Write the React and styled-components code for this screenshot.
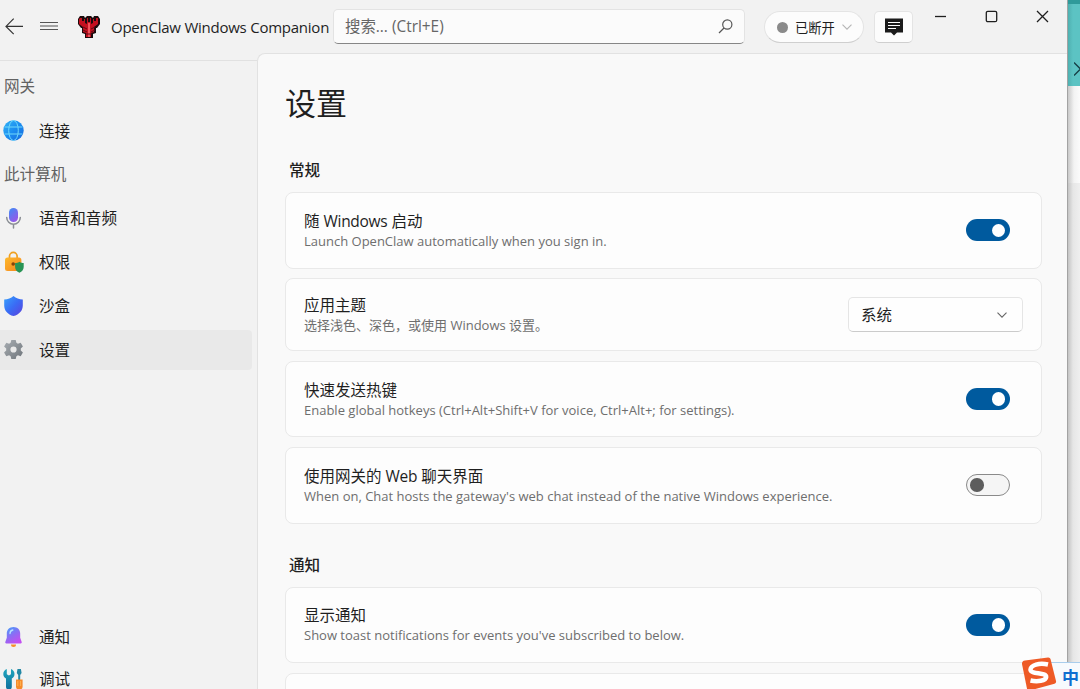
import React from "react";
import styled, { createGlobalStyle } from "styled-components";

const GlobalStyle = createGlobalStyle`
  * {
    box-sizing: border-box;
  }

  body {
    margin: 0;
    overflow: hidden;
    font-family: "Open Sans", "Noto Sans CJK SC", sans-serif;
    color: #1f1f1f;
  }

  svg {
    display: block;
    flex-shrink: 0;
  }
`;

const Screen = styled.div`
  position: relative;
  display: flex;
  width: 1080px;
  height: 689px;
  overflow: hidden;
`;

const Window = styled.div`
  display: flex;
  flex-direction: column;
  width: 1068px;
  height: 689px;
  background: #f2f2f2;
  border-right: 1px solid #a3a3a3;
`;

const Desktop = styled.div`
  flex: 1;
  display: flex;
  flex-direction: column;
  background: linear-gradient(90deg, #c4c4c4, #e6e6e6 5px, #efefef);
`;

const TealBlock = styled.div`
  display: flex;
  justify-content: flex-end;
  height: 86px;
  padding-top: 58px;
  overflow: hidden;
  border-top: 4px solid #2f9a9a;
  background: linear-gradient(90deg, #4fb0b0, #5cc3c3 5px);
`;

const DesktopEdge = styled.div`
  height: 97px;
  background: linear-gradient(90deg, #c9c9c9, #f3f3f3 6px, #fbfbfb);
`;

const TitleBar = styled.header`
  display: flex;
  align-items: flex-start;
  height: 53px;
`;

const NavIcon = styled.div`
  margin: ${(props) => props.$margin};
`;

const AppName = styled.div`
  width: 222px;
  margin: 16px 0 0 10px;
  font-size: 15px;
  line-height: 22px;
  letter-spacing: -0.24px;
  white-space: nowrap;
`;

const SearchBox = styled.div`
  display: flex;
  align-items: center;
  justify-content: space-between;
  width: 412px;
  height: 35px;
  margin-top: 9px;
  padding: 0 11px;
  border: 1px solid #e3e3e3;
  border-bottom: 1.5px solid #868686;
  border-radius: 5px;
  background: #fbfbfb;
  color: #666;
  font-size: 15.4px;
  line-height: 22px;
`;

const StatusPill = styled.div`
  display: flex;
  align-items: center;
  width: 100px;
  height: 32px;
  margin: 11px 0 0 19px;
  padding-left: 12px;
  border: 1px solid #e4e4e4;
  border-bottom-color: #cfcfcf;
  border-radius: 16px;
  background: #fcfcfc;
  font-size: 13.3px;
`;

const StatusDot = styled.span`
  width: 11px;
  height: 11px;
  margin-right: 7px;
  border-radius: 50%;
  background: #8a8a8a;
`;

const ChatButton = styled.div`
  display: flex;
  align-items: center;
  justify-content: center;
  width: 39px;
  height: 32px;
  margin: 11px 0 0 10px;
  border: 1px solid #e4e4e4;
  border-bottom-color: #cfcfcf;
  border-radius: 5px;
  background: #fcfcfc;
`;

const Controls = styled.div`
  display: flex;
  gap: 38px;
  margin: 10px 0 0 21px;
`;

const Body = styled.div`
  flex: 1;
  display: flex;
  min-height: 0;
`;

const Sidebar = styled.nav`
  display: flex;
  flex-direction: column;
  width: 257px;
  margin-top: 7px;
  padding-top: 4px;
  border-top: 1px solid #e1e1e1;
`;

const NavHeading = styled.div`
  height: 43.8px;
  padding-left: 4px;
  color: #626262;
  font-size: 15.6px;
  line-height: 43px;
`;

const NavItem = styled.div`
  display: flex;
  align-items: center;
  gap: 15px;
  width: 252px;
  height: 39.8px;
  margin: 2px 0;
  padding-left: 3px;
  border-radius: 0 4px 4px 0;
  background: ${(props) => (props.$active ? "#e9e9e9" : "transparent")};
  font-size: 15.6px;
  line-height: 22px;
`;

const NavFooter = styled.div`
  margin-top: auto;
  margin-bottom: -12px;
`;

const Page = styled.main`
  flex: 1;
  height: 690px;
  padding: 27px 25px 0 27px;
  border: 1px solid #e2e2e2;
  border-right: none;
  border-top-left-radius: 8px;
  background: #f9f9f9;
`;

const PageTitle = styled.h1`
  margin: 0;
  font-size: 31px;
  font-weight: 400;
  line-height: 44px;
`;

const SectionTitle = styled.h2`
  margin: ${(props) => props.$top} 0 11px 4px;
  font-size: 15.6px;
  font-weight: 500;
  line-height: 22px;
`;

const CardList = styled.div`
  display: flex;
  flex-direction: column;
  gap: 9.5px;
`;

const Card = styled.section`
  display: flex;
  align-items: center;
  justify-content: space-between;
  width: 757px;
  height: ${(props) => props.$height || "76.7px"};
  flex-shrink: 0;
  padding: 0 ${(props) => props.$right || "31px"} 0 18px;
  border: 1px solid #e9e9e9;
  border-radius: 8px;
  background: #fdfdfd;
`;

const CardTitle = styled.div`
  font-size: 15.5px;
  line-height: 22px;
  white-space: nowrap;
`;

const CardText = styled.div`
  color: #6e6e6e;
  font-size: 13px;
  line-height: 19px;
  letter-spacing: ${(props) => props.$spacing || "0"};
  white-space: nowrap;
`;

const Latin = styled.span`
  letter-spacing: -0.3px;
`;

const Switch = styled.div`
  display: flex;
  align-items: center;
  justify-content: ${(props) => (props.$on ? "flex-end" : "flex-start")};
  width: 44px;
  height: 22px;
  padding: 0 ${(props) => (props.$on ? "5px" : "3px")};
  border: ${(props) => (props.$on ? "none" : "1px solid #8a8a8a")};
  border-radius: 11px;
  background: ${(props) => (props.$on ? "#005a9e" : "#f5f5f5")};

  &::after {
    content: "";
    width: 13.5px;
    height: 13.5px;
    border-radius: 50%;
    background: ${(props) => (props.$on ? "#fff" : "#5d5d5d")};
  }
`;

const Select = styled.div`
  display: flex;
  align-items: center;
  justify-content: space-between;
  width: 175px;
  height: 35px;
  padding: 0 15px 0 12px;
  border: 1px solid #e5e5e5;
  border-bottom-color: #cbcbcb;
  border-radius: 5px;
  background: #fefefe;
  font-size: 15.5px;
`;

const ImeBar = styled.div`
  position: absolute;
  right: 0;
  bottom: 0;
  display: flex;
  align-items: center;
  width: 41px;
  height: 27px;
  padding-left: 23px;
  border-top: 1px solid #a9cdec;
  background: #f7fafd;
  color: #0f6fd0;
  font-size: 17px;
  font-weight: 700;
  white-space: nowrap;
`;

const ImeLogo = styled.div`
  position: absolute;
  left: 1020px;
  top: 656px;
`;

function Lobster() {
  return (
    <svg width="24" height="24" viewBox="0 0 24 24">
      <path d="M3 1h4l1 2 2-2h4l2 2 1-2h4l2 3v5l-3 4h-1v5l-3 1v4h-8v-4l-3-1v-5H4L1 9V4z" fill="#1c0b0d" />
      <path d="M3 3h2v3h2V4h1v4l2 1V3h1v4h2V3h1v6l2-1V4h1v2h2V3h2v6l-4 3v5l-3 1v4H9v-4l-3-1v-5L2 9V4z" fill="#c4101f" />
      <path d="M11 8h2v14h-2z" fill="#f0525a" />
      <path d="M6 12l4 2M6 15l4 2M18 12l-4 2M18 15l-4 2M9 19h6" stroke="#5d0a14" strokeWidth="1" />
    </svg>
  );
}

function Chevron({ color = "#666", size = 10 }) {
  return (
    <svg width={size} height="6" viewBox="0 0 10 6" fill="none" stroke={color} strokeWidth="1.1">
      <path d="M.5 .6L5 5.1 9.5 .6" />
    </svg>
  );
}

function Globe() {
  return (
    <svg width="21" height="21" viewBox="0 0 21 21">
      <defs>
        <linearGradient id="globe" x1="0" y1="0" x2="1" y2="1">
          <stop offset="0" stopColor="#35b4f5" />
          <stop offset=".5" stopColor="#1b8df0" />
          <stop offset="1" stopColor="#1768dd" />
        </linearGradient>
      </defs>
      <circle cx="10.5" cy="10.5" r="10.2" fill="url(#globe)" />
      <g fill="none" stroke="#70d8fa" strokeWidth="1">
        <ellipse cx="10.5" cy="10.5" rx="4.8" ry="10" />
        <path d="M1.5 7h18M1.5 14h18" />
      </g>
    </svg>
  );
}

function Mic() {
  return (
    <svg width="21" height="22" viewBox="0 0 21 22">
      <defs>
        <linearGradient id="mic" x1="0" y1="0" x2=".6" y2="1">
          <stop offset="0" stopColor="#3d8df5" />
          <stop offset="1" stopColor="#9558e8" />
        </linearGradient>
      </defs>
      <rect x="6" y="1" width="9" height="14" rx="4.5" fill="url(#mic)" />
      <path d="M3.7 10.5a6.8 6.8 0 0 0 13.6 0M10.5 17.5V21" fill="none" stroke="#8a8e94" strokeWidth="1.5" strokeLinecap="round" />
    </svg>
  );
}

function Lock() {
  return (
    <svg width="21" height="22" viewBox="0 0 21 22">
      <defs>
        <linearGradient id="lock" x1="0" y1="0" x2="1" y2="1">
          <stop offset="0" stopColor="#fdb92c" />
          <stop offset="1" stopColor="#f6861f" />
        </linearGradient>
      </defs>
      <path d="M6.5 8V5.2a3.8 3.8 0 0 1 7.6 0V8" fill="none" stroke="#efa020" strokeWidth="1.7" />
      <rect x="2" y="6.5" width="16.4" height="13.5" rx="2.5" fill="url(#lock)" />
      <circle cx="10.2" cy="13" r="1.8" fill="#84430c" />
      <path d="M16.4 10.7c1.4 1 2.8 1.4 4.3 1.4v4c0 2.7-1.7 4.6-4.3 5.6-2.6-1-4.3-2.9-4.3-5.6v-4c1.5 0 2.9-.4 4.3-1.4z" fill="#289455" />
    </svg>
  );
}

function Shield() {
  return (
    <svg width="21" height="22" viewBox="0 0 21 22">
      <defs>
        <linearGradient id="shield" x1="0" y1="0" x2="1" y2="1">
          <stop offset="0" stopColor="#38a2fb" />
          <stop offset=".5" stopColor="#3a6cf5" />
          <stop offset="1" stopColor="#5d40db" />
        </linearGradient>
      </defs>
      <path d="M10.5 1c2.6 2.2 5.6 3.3 9.3 3.4v6c0 5.2-3.4 8.7-9.3 10.7C4.600 19.100 1.200 15.600 1.200 10.400v-6C4.900 4.300 7.900 3.200 10.500 1z" fill="url(#shield)" />
    </svg>
  );
}

function Gear() {
  return (
    <svg width="21" height="21" viewBox="0 0 21 21">
      <defs>
        <linearGradient id="gear" x1="0" y1="0" x2="1" y2="1">
          <stop offset="0" stopColor="#a8adb2" />
          <stop offset="1" stopColor="#6f757b" />
        </linearGradient>
      </defs>
      <g fill="url(#gear)">
        <path fillRule="evenodd" d="M8.300 1h4.400l.7 2.800 1.500.9 2.800-.9 2.200 3.800-2.100 2v1.800l2.100 2-2.200 3.800-2.800-.9-1.500.9-.7 2.800H8.300l-.7-2.800-1.500-.9-2.800.9-2.200-3.800 2.100-2V9.600l-2.100-2 2.200-3.800 2.800.9 1.500-.9zM10.500 7.400a3.100 3.100 0 1 0 0 6.200 3.100 3.100 0 0 0 0-6.200z" />
      </g>
    </svg>
  );
}

function Bell() {
  return (
    <svg width="21" height="22" viewBox="0 0 21 22">
      <defs>
        <linearGradient id="bell" x1="0" y1="0" x2=".6" y2="1">
          <stop offset="0" stopColor="#3fa4fb" />
          <stop offset=".55" stopColor="#8b6df4" />
          <stop offset="1" stopColor="#c24ff0" />
        </linearGradient>
      </defs>
      <path d="M8 18.500h5a2.500 2.500 0 0 1-5 0z" fill="#f6912b" />
      <path d="M10.500 1c-4 0-6.700 2.800-6.700 6.600v4.200L2.300 16c-.2.900.2 1.400 1 1.400h14.400c.8 0 1.200-.5 1-1.400l-1.500-4.200V7.600C17.200 3.800 14.500 1 10.500 1z" fill="url(#bell)" />
      <path d="M7 7.500c0-2 1-3.200 2.800-3.500" fill="none" stroke="#b9e3ff" strokeWidth="1.300" strokeLinecap="round" />
    </svg>
  );
}

function Tools() {
  return (
    <svg width="21" height="22" viewBox="0 0 21 22">
      <defs>
        <linearGradient id="wrench" x1="0" y1="0" x2="0" y2="1">
          <stop offset="0" stopColor="#1fa5bd" />
          <stop offset="1" stopColor="#0f6f9c" />
        </linearGradient>
      </defs>
      <path d="M3.800 1v5.200l2.100 1.300L8 6.200V1c2.100.8 3.500 2.700 3.500 5 0 2.100-1.100 3.700-2.700 4.600V19c0 3.500-5.800 3.500-5.800 0v-8.400C1.400 9.700.3 8.100.3 6c0-2.300 1.400-4.200 3.500-5z" fill="url(#wrench)" />
      <path d="M14.500 1h3.400l.7 4-1.400 2v5h-2V7l-1.400-2z" fill="#2388a5" />
      <path d="M13 11.500h6.600v7.300c0 4-6.600 4-6.600 0z" fill="#f58b2a" />
      <path d="M14.800 13v5M17.600 13v5" stroke="#ffb14f" />
    </svg>
  );
}

export default function App() {
  return (
    <Screen>
      <GlobalStyle />
      <Window>
        <TitleBar>
          <NavIcon $margin="18px 0 0 5px">
            <svg width="18" height="17" viewBox="0 0 18 17" fill="none" stroke="#333" strokeWidth="1.2">
              <path d="M8.700.7L1 8.400l7.700 7.700M1 8.400h17" />
            </svg>
          </NavIcon>
          <NavIcon $margin="21px 0 0 17px">
            <svg width="18" height="10" viewBox="0 0 18 10" stroke="#555" strokeWidth="1">
              <path d="M0 1.500h18M0 5h18M0 8.500h18" />
            </svg>
          </NavIcon>
          <NavIcon $margin="14.500px 0 0 19px">
            <Lobster />
          </NavIcon>
          <AppName>OpenClaw Windows Companion</AppName>
          <SearchBox>
            <span>搜索... (Ctrl+E)</span>
            <svg width="15" height="15" viewBox="0 0 15 15" fill="none" stroke="#555" strokeWidth="1.200">
              <circle cx="9.300" cy="5.500" r="4.600" />
              <path d="M6 9L1 14" />
            </svg>
          </SearchBox>
          <StatusPill>
            <StatusDot />
            已断开
            <NavIcon $margin="0 0 0 7px">
              <Chevron color="#b5b5b5" />
            </NavIcon>
          </StatusPill>
          <ChatButton>
            <svg width="18" height="18" viewBox="0 0 18 18">
              <path d="M0 .500h18v14h-6L9 17.500l-3-3H0z" fill="#1b1b1b" />
              <path d="M3 4.500h12M3 7.500h12M3 10.500h8" stroke="#fff" strokeWidth="1.200" />
            </svg>
          </ChatButton>
          <Controls>
            <svg width="13" height="13" viewBox="0 0 13 13" fill="none" stroke="#1f1f1f" strokeWidth="1.300">
              <path d="M1 6.500h11" />
            </svg>
            <svg width="13" height="13" viewBox="0 0 13 13" fill="none" stroke="#1f1f1f" strokeWidth="1.300">
              <rect x="1.300" y="1.300" width="10.400" height="10.400" rx="1.500" />
            </svg>
            <svg width="13" height="13" viewBox="0 0 13 13" fill="none" stroke="#1f1f1f" strokeWidth="1.300">
              <path d="M1 1l11 11M12 1L1 12" />
            </svg>
          </Controls>
        </TitleBar>
        <Body>
          <Sidebar>
            <NavHeading>网关</NavHeading>
            <NavItem><Globe />连接</NavItem>
            <NavHeading>此计算机</NavHeading>
            <NavItem><Mic />语音和音频</NavItem>
            <NavItem><Lock />权限</NavItem>
            <NavItem><Shield />沙盒</NavItem>
            <NavItem $active><Gear />设置</NavItem>
            <NavFooter>
              <NavItem><Bell />通知</NavItem>
              <NavItem><Tools />调试</NavItem>
            </NavFooter>
          </Sidebar>
          <Page>
            <PageTitle>设置</PageTitle>
            <SectionTitle $top="34px">常规</SectionTitle>
            <CardList>
              <Card>
                <div>
                  <CardTitle>随 <Latin>Windows</Latin> 启动</CardTitle>
                  <CardText>Launch OpenClaw automatically when you sign in.</CardText>
                </div>
                <Switch $on />
              </Card>
              <Card $height="73px" $right="18px">
                <div>
                  <CardTitle>应用主题</CardTitle>
                  <CardText>选择浅色、深色，或使用 Windows 设置。</CardText>
                </div>
                <Select>
                  系统
                  <Chevron />
                </Select>
              </Card>
              <Card>
                <div>
                  <CardTitle>快速发送热键</CardTitle>
                  <CardText>Enable global hotkeys (Ctrl+Alt+Shift+V for voice, Ctrl+Alt+; for settings).</CardText>
                </div>
                <Switch $on />
              </Card>
              <Card>
                <div>
                  <CardTitle>使用网关的 <Latin>Web</Latin> 聊天界面</CardTitle>
                  <CardText>When on, Chat hosts the gateway's web chat instead of the native Windows experience.</CardText>
                </div>
                <Switch />
              </Card>
            </CardList>
            <SectionTitle $top="30px">通知</SectionTitle>
            <CardList>
              <Card>
                <div>
                  <CardTitle>显示通知</CardTitle>
                  <CardText>Show toast notifications for events you've subscribed to below.</CardText>
                </div>
                <Switch $on />
              </Card>
              <Card />
            </CardList>
          </Page>
        </Body>
      </Window>
      <Desktop>
        <TealBlock>
          <svg width="6" height="14" viewBox="0 0 6 14" fill="none" stroke="#173f45" strokeWidth="1.300">
            <path d="M0 .500l6.500 6.500L0 13.500" />
          </svg>
        </TealBlock>
        <DesktopEdge />
      </Desktop>
      <ImeBar>中</ImeBar>
      <ImeLogo>
        <svg width="37" height="34" viewBox="0 0 37 34">
          <path d="M5 4.500L28 1.500q2-.2 2.500 1.500L36 25q.4 2-1.500 2.700L10 34.500q-2.400.3-3-1.700L2 8q-.2-3 3-3.500z" fill="#ee5a26" />
          <path d="M28 8.500C19 6.500 11 9 10.500 13.500c-.4 5 16 2.500 15.700 7.500-.3 4-9 5-15.700 3.500" fill="none" stroke="#fff" strokeWidth="4.500" />
        </svg>
      </ImeLogo>
    </Screen>
  );
}
